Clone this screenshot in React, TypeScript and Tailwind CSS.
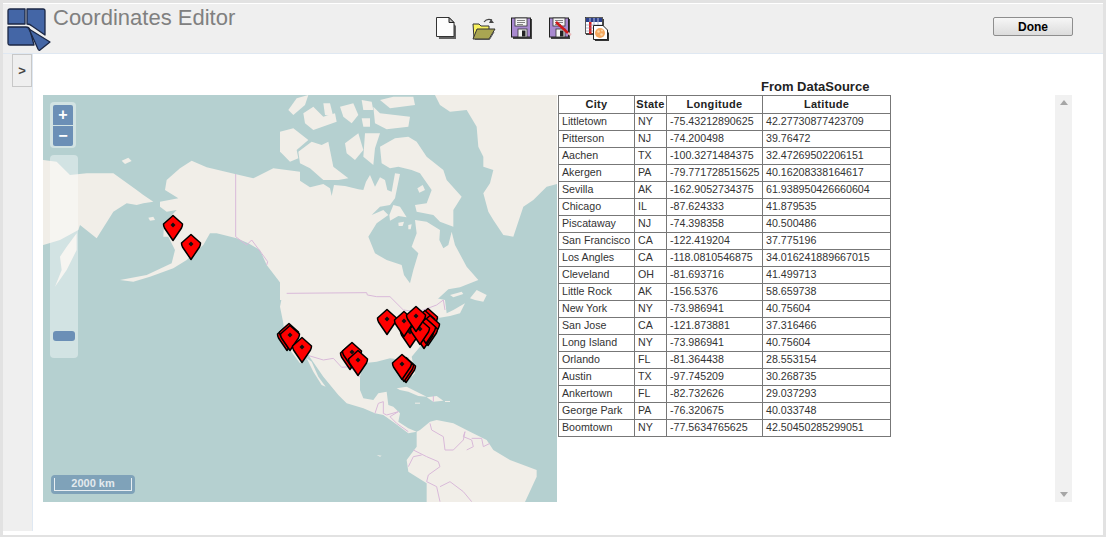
import React from 'react';

const rows = [
  ['Littletown', 'NY', '-75.43212890625', '42.27730877423709'],
  ['Pitterson', 'NJ', '-74.200498', '39.76472'],
  ['Aachen', 'TX', '-100.3271484375', '32.47269502206151'],
  ['Akergen', 'PA', '-79.771728515625', '40.16208338164617'],
  ['Sevilla', 'AK', '-162.9052734375', '61.938950426660604'],
  ['Chicago', 'IL', '-87.624333', '41.879535'],
  ['Piscataway', 'NJ', '-74.398358', '40.500486'],
  ['San Francisco', 'CA', '-122.419204', '37.775196'],
  ['Los Angles', 'CA', '-118.0810546875', '34.016241889667015'],
  ['Cleveland', 'OH', '-81.693716', '41.499713'],
  ['Little Rock', 'AK', '-156.5376', '58.659738'],
  ['New York', 'NY', '-73.986941', '40.75604'],
  ['San Jose', 'CA', '-121.873881', '37.316466'],
  ['Long Island', 'NY', '-73.986941', '40.75604'],
  ['Orlando', 'FL', '-81.364438', '28.553154'],
  ['Austin', 'TX', '-97.745209', '30.268735'],
  ['Ankertown', 'FL', '-82.732626', '29.037293'],
  ['George Park', 'PA', '-76.320675', '40.033748'],
  ['Boomtown', 'NY', '-77.5634765625', '42.50450285299051'],
];

// land pieces, each list is in its own 3x grid, see the <g> transforms below
const landWest = [
  // alaska
  '360,335 415,325 375,300 380,270 420,235 455,212 500,232 585,252 640,265 700,235 780,245 780,600 730,590 680,525 660,480 625,460 590,445 530,430 510,430 490,465 440,510 400,535 330,560 280,575 240,570 320,555 395,520 405,480 385,440 370,440 372,400 410,360 380,365 360,350',
  // siberia
  '0,208 10,210 50,215 90,255 140,250 165,250 220,250 290,300 310,315 340,335 310,340 290,345 260,340 220,365 170,445 120,405 115,420 60,450 10,465 0,465',
  // kamchatka
  '110,430 80,470 60,500 65,540 45,590 80,540 110,480',
  '245,212 265,203 275,213 255,222',
  '325,383 340,380 345,390 330,392',
];

const landNorth = [
  // canada down to the lakes, with hudson bay cut out
  '0,252 30,258 60,272 90,292 130,282 150,295 155,318 162,285 195,288 235,298 250,300 258,275 270,255 285,290 300,262 315,270 322,300 335,305 345,250 360,252 345,325 330,345 300,350 275,375 310,360 325,375 290,400 265,440 285,490 320,510 365,525 372,555 390,580 400,540 415,490 395,470 410,430 405,390 440,395 480,420 478,450 490,475 505,465 515,425 525,465 560,530 595,570 540,592 505,598 470,630 0,630',
  // southampton
  '340,345 360,350 380,382 355,378 330,392 328,375',
  '355,398 372,395 368,408 356,408',
  '385,405 395,403 392,418 385,418',
  // baffin
  '345,145 385,140 410,155 440,200 490,240 500,270 545,320 520,360 520,410 480,395 460,375 410,365 405,345 440,340 455,300 420,250 395,240 355,230 330,235 305,220 300,170',
  // arctic islands
  '0,125 40,115 85,150 50,180 55,205 30,215 5,190 0,185',
  '55,185 95,155 125,165 145,155 160,230 205,265 175,270 130,270 90,235 60,220',
  '195,160 235,130 250,180 225,210 200,190',
  '255,130 300,130 285,175 280,225 250,200',
  '25,60 50,25 85,15 75,45 40,75',
  '70,70 100,50 130,80 165,70 170,95 100,120 75,100',
  '130,40 150,40 160,80 135,75',
  '180,50 220,40 235,75 215,100 190,80',
  '245,30 275,35 280,60 250,60',
  '245,85 270,85 270,110 250,110',
  '280,50 300,70 390,80 385,110 320,118 285,100',
  '300,30 340,20 400,20 405,45 330,55',
  '412,295 428,285 435,300 418,308',
  // greenland
  '465,15 840,15 840,280 800,290 760,330 730,350 700,440 670,435 640,390 625,365 610,310 630,280 640,240 610,230 610,200 595,170 590,110 560,60 510,65 480,45',
];

const landSouth = [
  // usa and mexico
  '10,0 500,0 470,25 495,30 500,70 520,60 555,40 540,70 510,78 470,85 455,100 440,140 420,170 395,200 405,250 395,260 385,200 370,210 330,205 290,215 250,220 240,260 240,300 250,325 280,330 295,310 320,305 325,345 340,350 360,370 355,395 385,415 410,425 385,430 345,400 310,375 285,370 250,355 200,340 175,315 130,260 85,195 60,220 30,180 15,150 10,100 0,50',
  // baja
  '80,205 95,215 115,260 137,290 125,285 100,245',
  // newfoundland
  '570,25 590,0 620,15 610,35 585,30',
  '510,15 545,5 550,12 520,22',
  // caribbean
  '350,295 380,290 410,305 440,320 415,318 385,305 360,300',
  '440,322 470,318 490,332 460,335',
  '495,333 510,333 510,336 495,336',
  '405,338 420,338 420,341 405,341',
  '290,495 305,497 300,500',
  // south america
  '410,425 420,420 450,395 470,390 520,400 570,425 620,450 640,480 690,510 770,540 770,560 735,636 440,636 440,580 385,545 380,510 395,490 410,470',
];

const bordersSouth = [
  '20,10 260,8 262,15 290,20 330,20 370,60 410,65 430,60 470,45 490,30 495,60',
  '80,195 130,210 160,205 185,232 210,230 240,262',
  '285,370 295,340 310,335 310,370 320,375 355,365 330,380 350,400 385,425',
  '450,400 455,420 490,440 495,480 520,480 550,450 555,425 550,440 575,450 580,470 560,480',
  '575,445 605,445 610,470 630,460',
  '400,480 440,500 475,515 480,530 445,555 440,575 470,590 480,635',
  '385,530 400,500 425,495',
  '480,590 510,575 550,605 575,635',
  '460,318 460,335',
];

const alaskaBorder = '587,252 587,440 620,465 635,450 665,490 683,515 680,525';

// markers, back to front
const markers = [
  [173, 225], [191, 244], [287, 335], [289, 333], [290, 335], [302, 347], [350, 354], [352, 352], [358, 360],
  [428, 318], [425, 320], [430, 325], [428, 330], [424, 333], [426, 328], [410, 332], [420, 329], [387, 319],
  [404, 321], [416, 316], [406, 367], [404, 366], [402, 364],
];

const Marker = ({ x, y }: { x: number; y: number }) => (
  <g transform={`translate(${x} ${y})`}>
    <path
      d="M0 -9.5 L9.5 -1 Q9.5 1 8.5 3 L0 15.5 L-8.5 3 Q-9.5 1 -9.5 -1 Z"
      fill="#ff0000"
      stroke="#000"
      strokeWidth="1.5"
      strokeLinejoin="round"
    />
    <path d="M0 -2.5 L2.5 0 L0 2.5 L-2.5 0 Z" fill="#111" />
  </g>
);

const MapView = () => (
  <div className="relative w-[514px] h-[407px] shrink-0 overflow-hidden bg-[#b5d0d0]">
    <svg viewBox="43 95 514 407" className="block w-[514px] h-[407px]">
      <g transform="translate(40 90) scale(0.33333)" fill="#f1eee8">
        {landWest.map((p, i) => (
          <polygon key={i} points={p} />
        ))}
        <polyline points={alaskaBorder} fill="none" stroke="#d9b9d9" strokeWidth="3" />
      </g>
      <g transform="translate(280 90) scale(0.33333)" fill="#f1eee8">
        {landNorth.map((p, i) => (
          <polygon key={i} points={p} />
        ))}
      </g>
      <g transform="translate(280 290) scale(0.33333)" fill="#f1eee8">
        {landSouth.map((p, i) => (
          <polygon key={i} points={p} />
        ))}
        {bordersSouth.map((p, i) => (
          <polyline key={i} points={p} fill="none" stroke="#d9b9d9" strokeWidth="3" />
        ))}
      </g>
      {markers.map(([x, y], i) => (
        <Marker key={i} x={x} y={y} />
      ))}
    </svg>
    <div className="absolute left-[7px] top-[7px] w-[26px] h-[46px] rounded-[4px] bg-white/40 p-[3px]">
      <button className="block w-[20px] h-[20px] rounded-t-[2px] bg-[#6b8fb6] text-white font-bold text-[16px] leading-[18px] text-center font-['Liberation_Sans',sans-serif]">
        +
      </button>
      <button className="block w-[20px] h-[20px] mt-[1px] rounded-b-[2px] bg-[#6b8fb6] text-white font-bold text-[16px] leading-[18px] text-center font-['Liberation_Sans',sans-serif]">
        −
      </button>
    </div>
    <div className="absolute left-[7px] top-[60px] w-[28px] h-[203px] rounded-[4px] bg-white/40">
      <div className="absolute left-[3px] top-[176px] w-[22px] h-[10px] rounded-[3px] bg-[#6b8fb6]" />
    </div>
    <div className="absolute left-[8px] top-[380px] w-[84px] h-[19px] rounded-[4px] bg-[#7fa2b9] px-[3px] pt-[3px]">
      <div className="h-[13px] border border-t-0 border-[#e8eef2] text-center text-[11px] leading-[10px] font-bold text-[#e3eaee] font-['Liberation_Sans',sans-serif]">
        2000 km
      </div>
    </div>
  </div>
);

const DocIcon = () => (
  <svg width="20" height="22" viewBox="0 0 20 22" className="mr-[2px]">
    <path d="M2 3 H14 L20 9 V22 H3 Z" fill="#333" opacity="0.75" />
    <path d="M0.5 0.5 H13 L18 5.5 V19.5 H0.5 Z" fill="#fdfdfd" stroke="#333" strokeWidth="1" />
    <path d="M13 0.5 V5.5 H18 Z" fill="#bbb" stroke="#222" strokeWidth="1" />
  </svg>
);

const FolderIcon = () => (
  <svg width="24" height="24" viewBox="0 0 24 24">
    <path d="M12 5 Q15 1 20 3" fill="none" stroke="#444" strokeWidth="1.2" />
    <path d="M19 2 L22 6 L17 6 Z" fill="#444" />
    <path d="M1 7 H7 L9 9 H17 V21 H2 Z" fill="#f9f25f" stroke="#333" strokeWidth="1" />
    <path d="M5 12 H23 L17 22 H1 Z" fill="#a9a552" stroke="#333" strokeWidth="1" />
    <path d="M3 22.5 H17.5 L22 15" fill="none" stroke="#555" strokeWidth="1" />
  </svg>
);

const DiskIcon = ({ slashed }: { slashed?: boolean }) => (
  <svg width="24" height="22" viewBox="0 0 24 22">
    <rect x="3" y="2" width="19" height="20" fill="#444" />
    <rect x="1.5" y="1" width="19" height="19" fill="#a98ad0" stroke="#222" strokeWidth="1" />
    <rect x="5" y="1" width="12" height="8" fill="#f4f4f4" stroke="#333" strokeWidth="0.8" />
    <path d="M7 3.5 H15 M7 5.5 H15 M7 7.5 H13" stroke="#666" strokeWidth="0.8" />
    <rect x="8" y="12" width="9" height="8" fill="#f4f4f4" stroke="#333" strokeWidth="0.8" />
    <rect x="12" y="13.5" width="3.5" height="6" fill="#222" />
    {slashed && (
      <>
        <path d="M8 5 L20 16" stroke="#d01a1a" strokeWidth="2.4" />
        <path d="M20 16 L23 18" stroke="#e8b8b8" strokeWidth="2.2" />
      </>
    )}
  </svg>
);

const TableIcon = () => (
  <svg width="24" height="24" viewBox="0 0 24 24" className="-ml-px">
    <rect x="1" y="2" width="18" height="16" fill="#444" />
    <rect x="0.5" y="0.5" width="17" height="16" fill="#fff" stroke="#333" strokeWidth="0.8" />
    <rect x="1" y="1" width="16" height="4" fill="#2b3f8c" />
    <path d="M5 1 V5 M9 1 V5 M13 1 V5" stroke="#dfe4f4" strokeWidth="0.8" />
    <rect x="4" y="5" width="2.5" height="12" fill="#d71d1d" />
    <path d="M1 8 H17 M1 11 H17 M1 14 H17 M9 5 V17 M13 5 V17" stroke="#7d8ab0" strokeWidth="0.6" />
    <path d="M9 10 H18 L24 16 V24 H10 Z" fill="#333" />
    <path d="M8.5 8.5 H18 L22.5 13 V22.5 H8.5 Z" fill="#fff" stroke="#222" strokeWidth="1" />
    <circle cx="15" cy="16" r="5" fill="#f4a860" />
    <circle cx="13.5" cy="14.5" r="1.3" fill="#fbd9a8" />
    <circle cx="16.5" cy="17.5" r="1.3" fill="#fbd9a8" />
    <circle cx="17" cy="13.5" r="0.9" fill="#fbd9a8" />
  </svg>
);

const Logo = () => (
  <svg width="44" height="44" viewBox="0 0 44 44" className="shrink-0">
    <g fill="#4466a6" stroke="#1b2745" strokeWidth="1.3" strokeLinejoin="round">
      <path d="M1 3 Q1 1 3 1 H18 V16 H1 Z" />
      <path d="M20 1 H36 Q38 1 38 3 V27 L25 18 Q23 16 20 16 Z" />
      <path d="M1 19 H19 Q22 19 23 22 L27 37 H3 Q1 37 1 35 Z" />
      <path d="M22 21 L43 34 L33 42 Q32 43 31 41 Z" />
    </g>
  </svg>
);

const App: React.FC = () => {
  return (
    <div className="w-[1106px] h-[537px] bg-white border-t-[3px] border-x-[3px] border-b-2 border-[#e2e2e2] overflow-hidden pt-px font-['Liberation_Sans',Arial,sans-serif]">
      <div className="flex h-[50px] bg-[#efefef] border-b border-[#dfe8f2]">
        <div className="pl-[4px] pt-[4px]">
          <Logo />
        </div>
        <div className="ml-[2px] text-[22px] leading-[24px] pt-[2px] text-[#808080] w-[383px]">Coordinates Editor</div>
        <div className="flex items-start gap-[14px] pt-[13px]">
          <DocIcon />
          <FolderIcon />
          <DiskIcon />
          <DiskIcon slashed />
          <TableIcon />
        </div>
        <div className="ml-auto pr-[30px] pt-[13px]">
          <button className="block w-[80px] h-[19px] rounded-[2px] border border-[#8e8e8e] bg-gradient-to-b from-[#f6f6f6] to-[#dcdcdc] text-[12px] leading-[16px] font-bold text-black">
            Done
          </button>
        </div>
      </div>
      <div className="flex h-[477px]">
        <div className="w-[30px] shrink-0 bg-[#efefef] border-r border-[#dfe8f2]">
          <button className="block ml-[9px] w-[20px] h-[33px] border border-[#c8c8c8] text-[13px] font-bold text-[#444]">
            &gt;
          </button>
        </div>
        <div className="ml-[10px] mt-[41px] flex items-start">
          <MapView />
          <div className="ml-px w-[333px]">
            <div className="-mt-[16px] h-[16px] pl-[203px] text-[13px] leading-[15px] font-bold text-[#222] whitespace-nowrap">
              From DataSource
            </div>
            <table className="border-collapse table-fixed w-[333px] text-[10.67px] text-[#333]">
              <thead>
                <tr className="h-[18px] text-[11px] leading-[14px] font-bold tracking-[0.3px] text-[#222]">
                  <th className="w-[76px] border border-[#777] p-0 pb-px text-center">City</th>
                  <th className="w-[32px] border border-[#777] p-0 pb-px text-center">State</th>
                  <th className="w-[96px] border border-[#777] p-0 pb-px text-center">Longitude</th>
                  <th className="border border-[#777] p-0 pb-px text-center">Latitude</th>
                </tr>
              </thead>
              <tbody>
                {rows.map((r) => (
                  <tr key={r[0]} className="h-[17px]">
                    {r.map((c, i) => (
                      <td key={i} className="border border-[#777] px-[3px] pt-0 pb-[2px] leading-[13px] whitespace-nowrap">
                        {c}
                      </td>
                    ))}
                  </tr>
                ))}
              </tbody>
            </table>
          </div>
        </div>
        <div className="ml-[164px] mt-[41px] w-[17px] h-[407px] bg-[#f1f1f1] flex flex-col justify-between items-center py-[5px]">
          <div className="w-0 h-0 border-x-[4px] border-x-transparent border-b-[5px] border-b-[#a6a6a6]" />
          <div className="w-0 h-0 border-x-[4px] border-x-transparent border-t-[5px] border-t-[#a6a6a6]" />
        </div>
      </div>
    </div>
  );
};

export default App;
